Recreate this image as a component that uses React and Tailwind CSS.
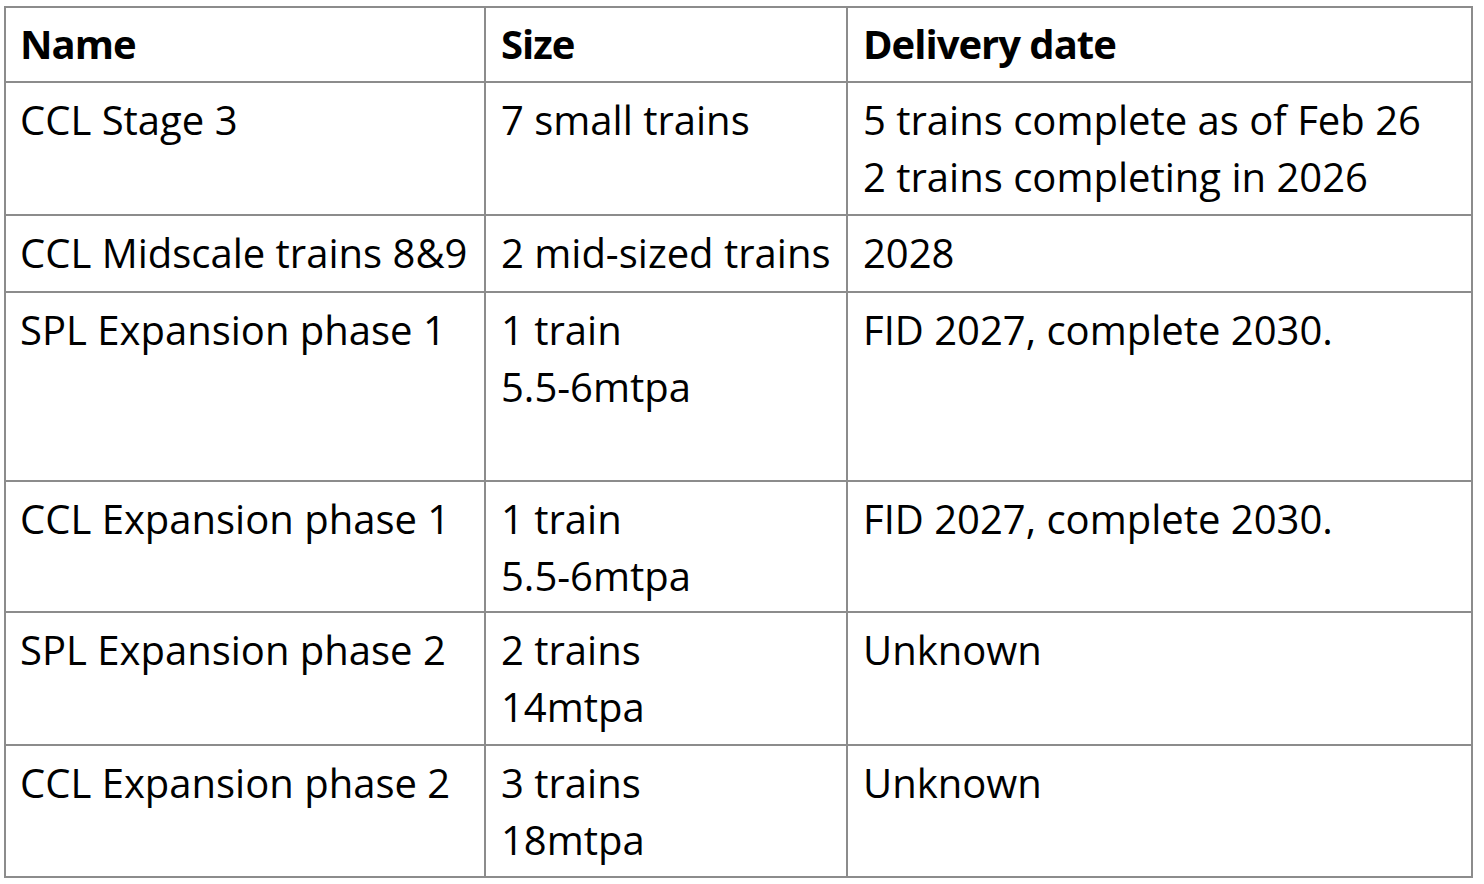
const rows = [
  { h: 'h-[133px]', name: 'CCL Stage 3', size: ['7 small trains'], date: ['5 trains complete as of Feb 26', '2 trains completing in 2026'] },
  { h: 'h-[77px]', name: 'CCL Midscale trains 8&9', size: ['2 mid-sized trains'], date: ['2028'] },
  { h: 'h-[189px]', name: 'SPL Expansion phase 1', size: ['1 train', '5.5-6mtpa'], date: ['FID 2027, complete 2030.'] },
  { h: 'h-[131px]', name: 'CCL Expansion phase 1', size: ['1 train', '5.5-6mtpa'], date: ['FID 2027, complete 2030.'] },
  { h: 'h-[133px]', name: 'SPL Expansion phase 2', size: ['2 trains', '14mtpa'], date: ['Unknown'] },
  { h: 'h-[132px]', name: 'CCL Expansion phase 2', size: ['3 trains', '18mtpa'], date: ['Unknown'] },
];

function Cell({ lines, bold, className }) {
  return (
    <div className={`border-r-2 border-b-2 border-[#8c8c8c] pl-[14px] ${className || ''}`}>
      {lines.map((l, i) => (
        <div key={i} className={bold ? 'font-bold tracking-[-1px]' : ''}>{l}</div>
      ))}
    </div>
  );
}

export default function App() {
  return (
    <div className="min-h-screen bg-white pt-[6px] pl-[4px] text-black text-[40px] leading-[57px] font-['Open_Sans',sans-serif]">
      <div className="grid grid-cols-[480px_362px_625px] w-fit border-l-2 border-t-2 border-[#8c8c8c]">
        <Cell lines={['Name']} bold className="h-[75px] pt-[7px]" />
        <Cell lines={['Size']} bold className="h-[75px] pt-[7px] pl-[15px]" />
        <Cell lines={['Delivery date']} bold className="h-[75px] pt-[7px] pl-[15px]" />
        {rows.map((r) => (
          <div key={r.name} className="contents">
            <Cell lines={[r.name]} className={`${r.h} pt-[8px]`} />
            <Cell lines={r.size} className={`${r.h} pt-[8px] pl-[15px]`} />
            <Cell lines={r.date} className={`${r.h} pt-[8px] pl-[15px]`} />
          </div>
        ))}
      </div>
    </div>
  );
}
